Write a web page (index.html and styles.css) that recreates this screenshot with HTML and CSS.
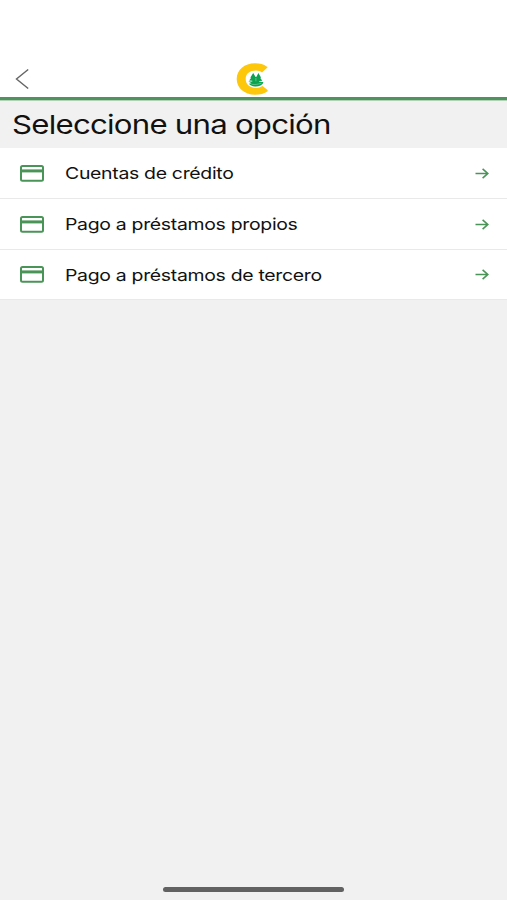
FILE: index.html
```html
<!DOCTYPE html>
<html lang="es">
<head>
<meta charset="utf-8">
<title>Seleccione una opción</title>
<link rel="stylesheet" href="styles.css">
</head>
<body>
<header class="topbar">
  <svg class="back" viewBox="0 0 14 20" width="14" height="20"><path d="M13.200 .5 L1.500 10 L13.200 19.500"/></svg>
  <svg class="logo" viewBox="0 0 33 32" width="33" height="32">
    <path class="ring" d="M31.700 4.200 C28 1.200 23.500 .3 19 .3 C8.500 .3 .7 7 .7 16 C.7 25 8.500 31.700 19 31.700 C24 31.700 28.500 30.600 31.600 28.200 V27 L26.500 23 C24.500 24.300 22.500 24.900 20 24.900 C14 24.900 9.700 21.500 9.700 16 C9.700 10.500 14 7.600 20 7.600 C22.500 7.600 24.300 8.300 26 9.500 Z"/>
    <path class="trees" d="M17.200 10 L19.600 14 L20.300 14 L22.400 10 L25 14.500 L24.300 15 L26.300 17.800 L23.300 18 V18.800 C25 18.800 26.500 18.900 27.500 19.500 C26 22.300 23 23.700 19 23.500 C16 23.300 14 22.200 13 20.800 L15.600 20.300 L12.300 18.400 L16.300 18.400 V17.800 L13.200 17.500 L15 15 L14.400 14.500 Z"/>
    <path class="gap" d="M19.900 15 V18.300 M15.500 21.300 C19 21.800 22 21.400 25.500 20.100"/>
  </svg>
</header>
<main>
  <h1 class="title"><span>Seleccione una opción</span></h1>
  <ul class="menu">
    <li class="item"><svg class="card" viewBox="0 0 24 17" width="24" height="17"><rect x="1" y="1" width="22" height="14.800" rx="1.500"/><path d="M1 5.900 H23"/></svg><span class="label">Cuentas de crédito</span><svg class="arrow" viewBox="0 0 14 11" width="14" height="11"><path d="M.5 5.500 H12.600 M7.600 .9 L12.800 5.500 L7.600 10.100"/></svg></li>
    <li class="item"><svg class="card" viewBox="0 0 24 17" width="24" height="17"><rect x="1" y="1" width="22" height="14.800" rx="1.500"/><path d="M1 5.900 H23"/></svg><span class="label">Pago a préstamos propios</span><svg class="arrow" viewBox="0 0 14 11" width="14" height="11"><path d="M.5 5.500 H12.600 M7.600 .9 L12.800 5.500 L7.600 10.100"/></svg></li>
    <li class="item"><svg class="card" viewBox="0 0 24 17" width="24" height="17"><rect x="1" y="1" width="22" height="14.800" rx="1.500"/><path d="M1 5.900 H23"/></svg><span class="label">Pago a préstamos de tercero</span><svg class="arrow" viewBox="0 0 14 11" width="14" height="11"><path d="M.5 5.500 H12.600 M7.600 .9 L12.800 5.500 L7.600 10.100"/></svg></li>
  </ul>
</main>
<div class="home"></div>
</body>
</html>
```
FILE: styles.css
```css
* { box-sizing: border-box; }
body {
  margin: 0;
  height: 900px;
  display: flex;
  flex-direction: column;
  background: #f1f1f1;
  color: #111;
  font-family: Inter, "Liberation Sans", sans-serif;
  overflow: hidden;
}
svg { display: block; fill: none; }
main { flex: 1; }
.topbar {
  height: 100px;
  padding: 63px 17px 0 15px;
  display: grid;
  grid-template-columns: 14px 1fr 14px;
  background: #fff;
  border-bottom: 3px solid #4f945e;
}
.back { margin-top: 6px; stroke: #666; stroke-width: 1.4; }
.logo { justify-self: center; }
.ring { fill: #fdc70c; }
.trees { fill: #0ba34e; }
.gap { stroke: #8fd3aa; stroke-width: .6; }
.title {
  margin: 0;
  height: 48px;
  padding-left: 12px;
  border-top: 1px solid #b2d2b8;
  font-size: 26px;
  font-weight: 400;
  line-height: 48px;
}
.title span, .label {
  display: inline-block;
  transform-origin: 0 50%;
  white-space: nowrap;
}
.title span { transform: scaleX(1.2); letter-spacing: -.64px; }
.menu { margin: 0; padding: 0; list-style: none; }
.item {
  height: 51px;
  padding: 0 18.5px 0 19.5px;
  display: flex;
  align-items: center;
  background: #fff;
  border-bottom: 1px solid #e9e9e9;
}
.item:last-child { height: 50px; }
.label {
  margin-left: 21px;
  font-size: 16.5px;
  line-height: 24px;
  letter-spacing: -.28px;
  transform: scaleX(1.18);
}
.card { stroke: #4b9457; stroke-width: 2; }
.card path { stroke-width: 3; }
.arrow { margin-left: auto; stroke: #4b9457; stroke-width: 1.6; }
.home {
  align-self: center;
  width: 181px;
  height: 5px;
  margin-bottom: 8px;
  border-radius: 3px;
  background: #626262;
}
```
